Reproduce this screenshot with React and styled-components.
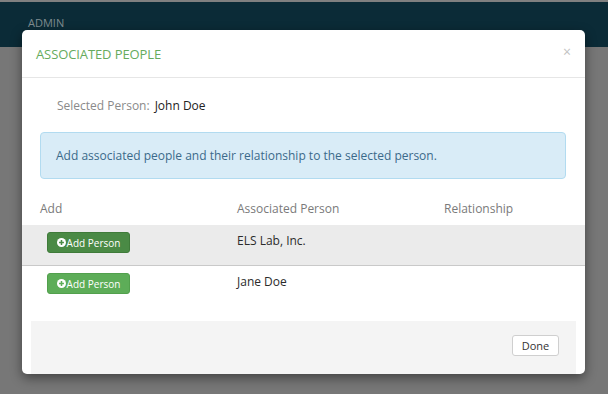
import styled, { createGlobalStyle } from "styled-components";

const GlobalStyle = createGlobalStyle`
  html, body {
    margin: 0;
    padding: 0;
    background: #777777;
    font-family: "Open Sans", "Liberation Sans", sans-serif;
  }
  #root {
    height: 394px;
    overflow: hidden;
  }
`;

const Page = styled.div`
  position: relative;
  width: 608px;
  height: 394px;
  background: #777777;
`;

const Navbar = styled.div`
  height: 47px;
  border-top: 2px solid #808080;
  background: #0b2b37;
  display: flex;
  align-items: center;
  padding-left: 28px;
  box-sizing: border-box;
`;

const NavLabel = styled.span`
  color: #7f8b90;
  font-size: 11px;
  margin-top: -4px;
`;

const Modal = styled.div`
  position: absolute;
  left: 22px;
  top: 30px;
  width: 563px;
  height: 344px;
  background: #fff;
  border-radius: 5px;
  box-shadow: 0 4px 12px rgba(0, 0, 0, 0.45);
  display: flex;
  flex-direction: column;
  overflow: hidden;
`;

const Header = styled.div`
  height: 47px;
  flex: none;
  display: flex;
  align-items: center;
  justify-content: space-between;
  padding: 0 14px;
  border-bottom: 1px solid #e6e6e6;
`;

const Title = styled.h4`
  margin: 0;
  font-size: 13px;
  font-weight: 400;
  color: #66ab5d;
  text-transform: uppercase;
  letter-spacing: -0.1px;
`;

const Close = styled.span`
  color: #c2c2c2;
  font-size: 14px;
  line-height: 1;
  margin-top: -4px;
`;

const Selected = styled.div`
  display: flex;
  gap: 5px;
  padding: 19px 0 0 35px;
  font-size: 12px;
  line-height: 18px;
`;

const Label = styled.span`
  color: #8a8a8a;
`;

const Value = styled.span`
  color: #222;
`;

const Alert = styled.div`
  margin: 17px 19px 0 18px;
  height: 47px;
  box-sizing: border-box;
  padding: 0 15px;
  display: flex;
  align-items: center;
  background: #d9ecf7;
  border: 1px solid #b2dbf0;
  border-radius: 4px;
  color: #3b6a8a;
  font-size: 12px;
`;

const Row = styled.div`
  display: grid;
  grid-template-columns: 197px 207px 1fr;
  padding: 0 18px;
  box-sizing: border-box;
  height: ${(p) => p.$h}px;
  background: ${(p) => (p.$shade ? "#ebebeb" : "transparent")};
  border-bottom: ${(p) => (p.$line ? "1px solid #c9c9c9" : "none")};
  align-items: ${(p) => (p.$head ? "end" : "start")};
`;

const HeadCell = styled.div`
  font-size: 12px;
  line-height: 17px;
  color: #7a7a7a;
  padding-bottom: 8px;
`;

const Cell = styled.div`
  font-size: 12px;
  color: #2b2b2b;
  padding-top: 7px;
  padding-left: ${(p) => (p.$btn ? 7 : 0)}px;
  line-height: 18px;
`;

const AddButton = styled.button`
  width: 83px;
  height: 21px;
  box-sizing: border-box;
  display: flex;
  align-items: center;
  justify-content: center;
  gap: 1px;
  border-radius: 3px;
  border: 1px solid ${(p) => (p.$active ? "#3f7b3a" : "#52a04d")};
  background: ${(p) => (p.$active ? "#4a8a45" : "#5dad58")};
  color: #fff;
  font-family: inherit;
  font-size: 10px;
  padding: 0;
`;

const FooterWrap = styled.div`
  margin-top: auto;
  padding: 0 9px;
`;

const Footer = styled.div`
  height: 53px;
  background: #f4f4f4;
  display: flex;
  justify-content: flex-end;
  align-items: flex-start;
  padding: 14px 17px 0 0;
  box-sizing: border-box;
`;

const DoneButton = styled.button`
  width: 47px;
  height: 21px;
  box-sizing: border-box;
  background: #fff;
  border: 1px solid #cfcfcf;
  border-radius: 3px;
  font-family: inherit;
  font-size: 11px;
  color: #333;
  padding: 0;
`;

const PlusCircle = ({ color }) => (
  <svg width="9" height="9" viewBox="0 0 10 10">
    <circle cx="5" cy="5" r="5" fill="#fff" />
    <path d="M5 2.3v5.4M2.3 5h5.4" stroke={color} strokeWidth="1.7" />
  </svg>
);

const people = [
  { name: "ELS Lab, Inc.", active: true },
  { name: "Jane Doe", active: false },
];

export default function App() {
  return (
    <Page>
      <GlobalStyle />
      <Navbar>
        <NavLabel>ADMIN</NavLabel>
      </Navbar>
      <Modal>
        <Header>
          <Title>Associated People</Title>
          <Close>×</Close>
        </Header>
        <Selected>
          <Label>Selected Person:</Label>
          <Value>John Doe</Value>
        </Selected>
        <Alert>Add associated people and their relationship to the selected person.</Alert>
        <Row $head $h={46}>
          <HeadCell>Add</HeadCell>
          <HeadCell>Associated Person</HeadCell>
          <HeadCell>Relationship</HeadCell>
        </Row>
        {people.map((p, i) => (
          <Row key={p.name} $h={41} $shade={i === 0} $line={i === 0}>
            <Cell $btn>
              <AddButton $active={p.active}>
                <PlusCircle color={p.active ? "#4a8a45" : "#5dad58"} />
                Add Person
              </AddButton>
            </Cell>
            <Cell>{p.name}</Cell>
            <Cell />
          </Row>
        ))}
        <FooterWrap>
          <Footer>
            <DoneButton>Done</DoneButton>
          </Footer>
        </FooterWrap>
      </Modal>
    </Page>
  );
}
